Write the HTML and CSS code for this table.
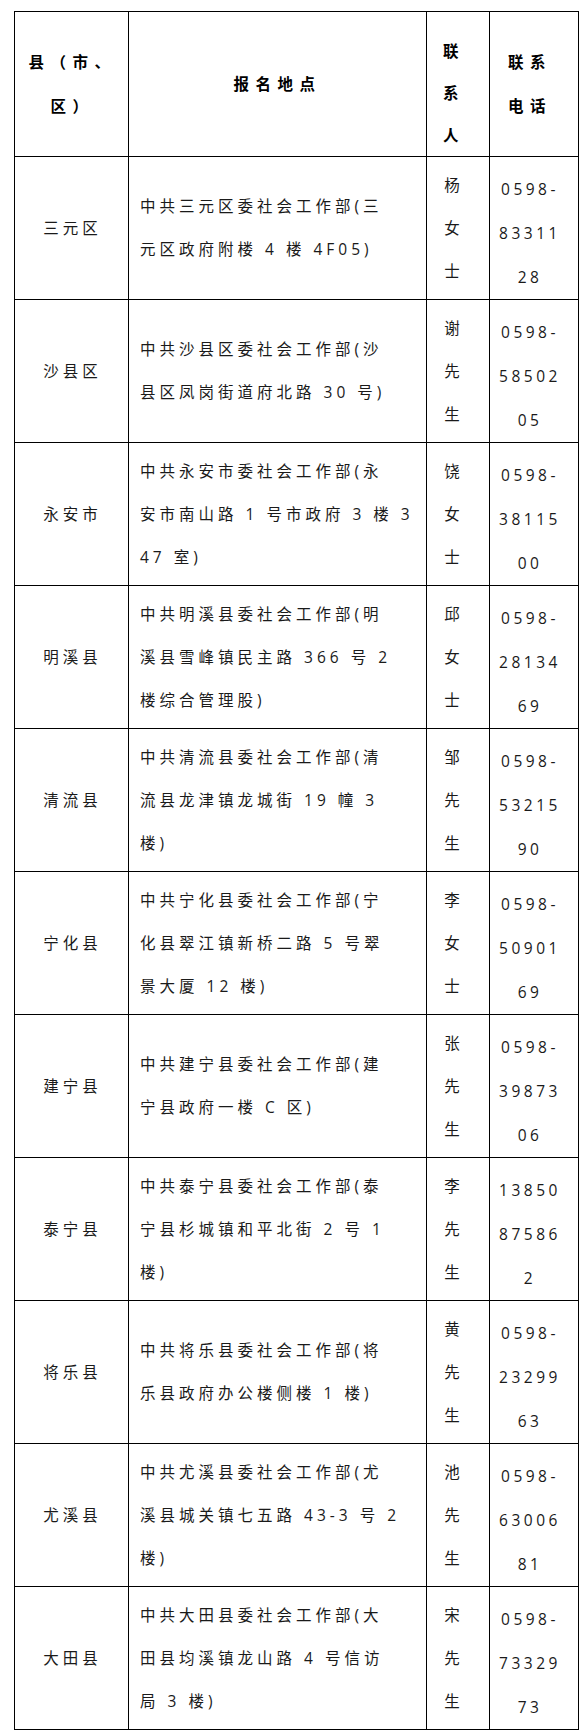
FILE: index.html
```html
<!DOCTYPE html>
<html lang="zh-CN">
<head>
<meta charset="utf-8">
<title>报名地点</title>
<link rel="stylesheet" href="styles.css">
</head>
<body>
<div class="page">
<table class="sheet">
  <colgroup>
    <col class="c-county">
    <col class="c-addr">
    <col class="c-person">
    <col class="c-phone">
  </colgroup>
  <thead>
    <tr>
      <th class="county">县（市、<br>区）</th>
      <th class="addr-head">报名地点</th>
      <th class="person">联<br>系<br>人</th>
      <th class="phone">联系<br>电话</th>
    </tr>
  </thead>
  <tbody>
    <tr>
      <td class="county">三元区</td>
      <td class="addr">中共三元区委社会工作部(三<br>元区政府附楼 4 楼 4F05)</td>
      <td class="person">杨<br>女<br>士</td>
      <td class="phone">0598-<br>83311<br>28</td>
    </tr>
    <tr>
      <td class="county">沙县区</td>
      <td class="addr">中共沙县区委社会工作部(沙<br>县区凤岗街道府北路 30 号)</td>
      <td class="person">谢<br>先<br>生</td>
      <td class="phone">0598-<br>58502<br>05</td>
    </tr>
    <tr>
      <td class="county">永安市</td>
      <td class="addr">中共永安市委社会工作部(永<br>安市南山路 1 号市政府 3 楼 3<br>47 室)</td>
      <td class="person">饶<br>女<br>士</td>
      <td class="phone">0598-<br>38115<br>00</td>
    </tr>
    <tr>
      <td class="county">明溪县</td>
      <td class="addr">中共明溪县委社会工作部(明<br>溪县雪峰镇民主路 366 号 2<br>楼综合管理股)</td>
      <td class="person">邱<br>女<br>士</td>
      <td class="phone">0598-<br>28134<br>69</td>
    </tr>
    <tr>
      <td class="county">清流县</td>
      <td class="addr">中共清流县委社会工作部(清<br>流县龙津镇龙城街 19 幢 3<br>楼)</td>
      <td class="person">邹<br>先<br>生</td>
      <td class="phone">0598-<br>53215<br>90</td>
    </tr>
    <tr>
      <td class="county">宁化县</td>
      <td class="addr">中共宁化县委社会工作部(宁<br>化县翠江镇新桥二路 5 号翠<br>景大厦 12 楼)</td>
      <td class="person">李<br>女<br>士</td>
      <td class="phone">0598-<br>50901<br>69</td>
    </tr>
    <tr>
      <td class="county">建宁县</td>
      <td class="addr">中共建宁县委社会工作部(建<br>宁县政府一楼 C 区)</td>
      <td class="person">张<br>先<br>生</td>
      <td class="phone">0598-<br>39873<br>06</td>
    </tr>
    <tr>
      <td class="county">泰宁县</td>
      <td class="addr">中共泰宁县委社会工作部(泰<br>宁县杉城镇和平北街 2 号 1<br>楼)</td>
      <td class="person">李<br>先<br>生</td>
      <td class="phone">13850<br>87586<br>2</td>
    </tr>
    <tr>
      <td class="county">将乐县</td>
      <td class="addr">中共将乐县委社会工作部(将<br>乐县政府办公楼侧楼 1 楼)</td>
      <td class="person">黄<br>先<br>生</td>
      <td class="phone">0598-<br>23299<br>63</td>
    </tr>
    <tr>
      <td class="county">尤溪县</td>
      <td class="addr">中共尤溪县委社会工作部(尤<br>溪县城关镇七五路 43-3 号 2<br>楼)</td>
      <td class="person">池<br>先<br>生</td>
      <td class="phone">0598-<br>63006<br>81</td>
    </tr>
    <tr>
      <td class="county">大田县</td>
      <td class="addr">中共大田县委社会工作部(大<br>田县均溪镇龙山路 4 号信访<br>局 3 楼)</td>
      <td class="person">宋<br>先<br>生</td>
      <td class="phone">0598-<br>73329<br>73</td>
    </tr>
  </tbody>
</table>
</div>
</body>
</html>
```

FILE: styles.css
```css
html, body {
  margin: 0;
  padding: 0;
  background: #fff;
}

.page {
  padding: 11px 0 0 14px;
}

.sheet {
  border-collapse: collapse;
  table-layout: fixed;
  width: 565px;
  font-family: "Open Sans", "Noto Sans CJK SC", sans-serif;
  font-size: 15.5px;
  color: #1a1a1a;
}

.c-county { width: 114px; }
.c-addr { width: 298px; }
.c-person { width: 63px; }
.c-phone { width: 89px; }

.sheet th,
.sheet td {
  border: 1px solid #000;
  padding: 6.5px 0;
  vertical-align: middle;
  white-space: nowrap;
}

.sheet th {
  font-weight: bold;
  color: #000;
  line-height: 44px;
  letter-spacing: 6.5px;
  text-align: center;
}

.sheet td {
  line-height: 43px;
  letter-spacing: 4px;
}

.sheet .county {
  text-align: center;
  padding-left: 2px;
}

.sheet th.addr-head {
  text-align: center;
}

.sheet td.addr {
  text-align: left;
  padding-left: 11px;
}

.sheet .person,
.sheet .phone {
  text-align: center;
  padding-right: 8px;
}

.sheet th.person {
  padding-top: 18px;
  padding-bottom: 0;
  line-height: 42px;
}

.sheet td.phone {
  padding-top: 10px;
  padding-bottom: 0;
  line-height: 44px;
  letter-spacing: 3.5px;
}
```
